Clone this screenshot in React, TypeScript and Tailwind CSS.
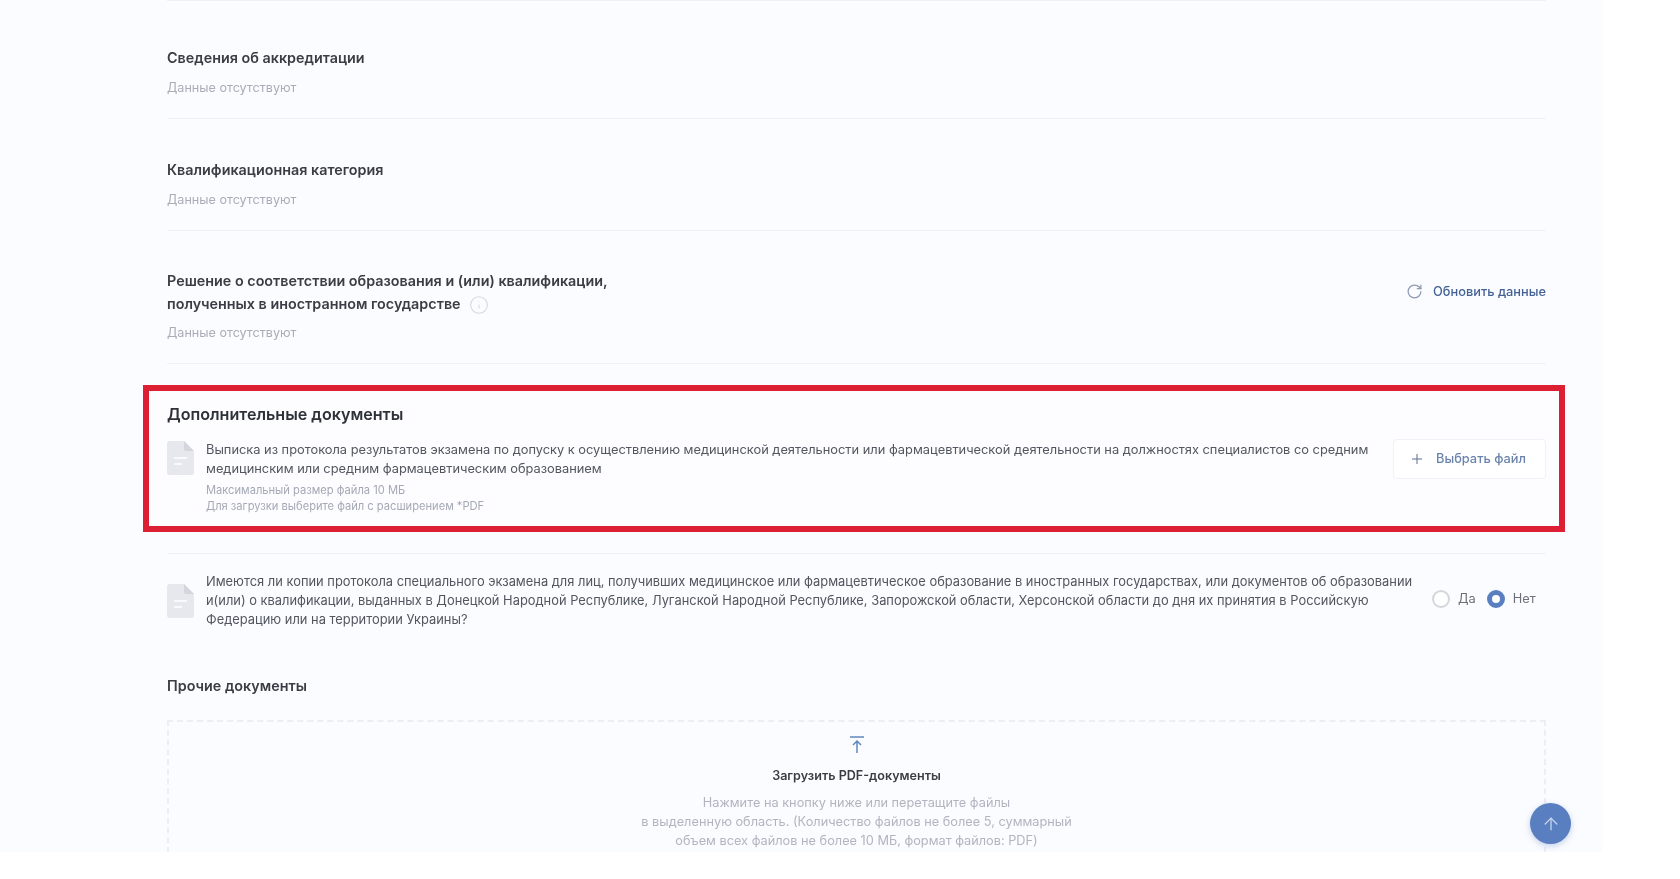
import { ArrowUp, Info, Plus, RotateCw } from "lucide-react";

const font = "font-['Inter','Noto_Sans',sans-serif]";

function FileIcon() {
  return (
    <svg width="27" height="34" viewBox="0 0 27 34" className="shrink-0">
      <path d="M3 0h14l10 10v21a3 3 0 0 1-3 3H3a3 3 0 0 1-3-3V3a3 3 0 0 1 3-3z" fill="#e6e8ee" />
      <path d="M17 0l10 10h-8a2 2 0 0 1-2-2z" fill="#d3d6de" />
      <path d="M7 17h13M7 23h8" stroke="#f8f9fc" strokeWidth="2" />
    </svg>
  );
}

function Info_({ title, note }: { title: string; note: string }) {
  return (
    <section className="border-b border-[#eff1f6] pb-[20px]">
      <h3 className="text-[14.35px] leading-[22px] font-semibold text-[#3a3d44]">{title}</h3>
      <p className="mt-[9px] text-[12.6px] leading-[20px] text-[#a9adb8]">{note}</p>
    </section>
  );
}

export default function App() {
  return (
    <div className={`relative h-[879px] overflow-hidden bg-white ${font}`}>
      <main className="h-[852px] w-[1602px] overflow-hidden bg-[#fbfcff] pr-[56px] pl-[167px] blur-[0.7px]">
        <div className="border-t border-[#eff1f6] pt-[46px]">
          <Info_ title="Сведения об аккредитации" note="Данные отсутствуют" />
        </div>
        <div className="pt-[40px]">
          <Info_ title="Квалификационная категория" note="Данные отсутствуют" />
        </div>

        <section className="mt-[38px] flex justify-between border-b border-[#eff1f6] pb-[20px]">
          <div>
            <h3 className="text-[14.35px] leading-[23px] font-semibold text-[#3a3d44]">
              Решение о соответствии образования и (или) квалификации,
              <br />
              полученных в иностранном государстве
              <Info className="ml-[8px] inline-block text-[#d4d7de]" size={20} strokeWidth={1.25} />
            </h3>
            <p className="mt-[8px] text-[12.6px] leading-[20px] text-[#a9adb8]">Данные отсутствуют</p>
          </div>
          <button className="mt-[13px] flex items-center gap-[10px] self-start text-[12.8px] font-medium text-[#456296]">
            <RotateCw size={17} strokeWidth={1.75} className="text-[#8d99b3]" />
            Обновить данные
          </button>
        </section>

        {/* red frame */}
        <section className="mt-[21px] mr-[-19px] ml-[-24px] h-[147px] border-[6px] border-[#dc1f32] bg-[#fdfdff] pt-[11px] pr-[13px] pl-[18px]">
          <h2 className="text-[16.1px] leading-[24px] font-semibold text-[#2e3137]">Дополнительные документы</h2>
          <div className="mt-[15px] flex items-start gap-[12px]">
            <FileIcon />
            <div className="flex-1">
              <p className="text-[12.83px] leading-[18.5px] text-[#52565f]">
                Выписка из протокола результатов экзамена по допуску к осуществлению медицинской деятельности или фармацевтической деятельности на должностях специалистов со средним медицинским или средним фармацевтическим образованием
              </p>
              <p className="mt-[4px] text-[11.15px] leading-[16px] text-[#a5a9b5]">
                Максимальный размер файла 10 МБ
                <br />
                Для загрузки выберите файл с расширением *PDF
              </p>
            </div>
            <button className="mt-[-2px] ml-[12px] flex h-[40px] w-[153px] shrink-0 items-center justify-center gap-[11px] rounded-[4px] border border-[#f0f2f7] bg-white pr-[4px] text-[12.8px] font-medium text-[#6c84ad]">
              <Plus size={16} strokeWidth={1.5} className="text-[#5d6f8f]" />
              Выбрать файл
            </button>
          </div>
        </section>

        <div className="mt-[21px] flex items-center gap-[12px] border-t border-[#eff1f6] pt-[18px]">
          <FileIcon />
          <p className="w-[1209px] shrink-0 text-[12.88px] leading-[19px] text-[#52565f]">
            Имеются ли копии протокола специального экзамена для лиц, получивших медицинское или фармацевтическое образование в иностранных государствах, или документов об образовании и(или) о квалификации, выданных в Донецкой Народной Республике, Луганской Народной Республике, Запорожской области, Херсонской области до дня их принятия в Российскую Федерацию или на территории Украины?
          </p>
          <div className="mt-[-3px] ml-[5px] flex items-center text-[12.8px] text-[#6d7078]">
            <span className="h-[18px] w-[18px] rounded-full border-2 border-[#d4d6dc] bg-white" />
            <span className="ml-[8px]">Да</span>
            <span className="ml-[11px] h-[18px] w-[18px] rounded-full border-[5px] border-[#5a7fc0] bg-white" />
            <span className="ml-[8px]">Нет</span>
          </div>
        </div>

        <h3 className="mt-[46px] text-[14.35px] leading-[22px] font-semibold text-[#3a3d44]">Прочие документы</h3>
        <div className="mt-[23px] flex flex-col items-center border-2 border-dashed border-[#eceef4] pt-[14px] pb-[40px] text-center">
          <svg width="16" height="18" viewBox="0 0 16 18" fill="none" stroke="#5f88bd" strokeWidth="1.5">
            <path d="M1 1h14M8 17V5M4 9l4-4 4 4" />
          </svg>
          <h4 className="mt-[12px] text-[12.55px] leading-[20px] font-semibold text-[#3a3d44]">Загрузить PDF-документы</h4>
          <p className="mt-[7px] text-[12.75px] leading-[19px] text-[#b1b5c0]">
            Нажмите на кнопку ниже или перетащите файлы
            <br />
            в выделенную область. (Количество файлов не более 5, суммарный
            <br />
            объем всех файлов не более 10 МБ, формат файлов: PDF)
          </p>
        </div>
      </main>

      <button className="absolute top-[803px] left-[1530px] flex h-[41px] w-[41px] items-center justify-center rounded-full bg-[#5a7fc0] shadow-[0_2px_6px_rgba(90,127,192,0.35)]">
        <ArrowUp size={20} strokeWidth={1.5} className="text-[#c9d7ef]" />
      </button>
    </div>
  );
}
